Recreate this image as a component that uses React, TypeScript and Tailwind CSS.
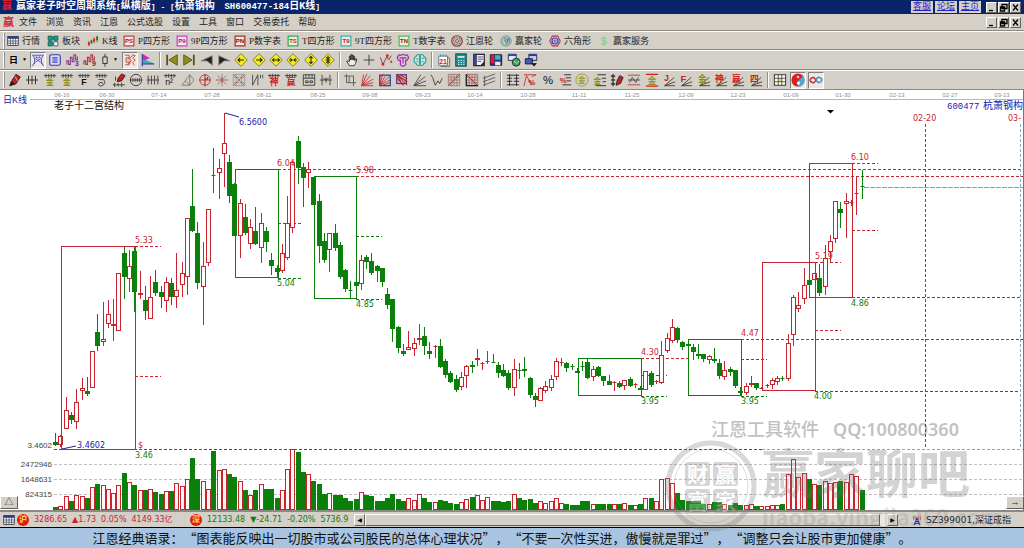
import type { ReactNode } from 'react'
import clsx from 'clsx'

const RED = '#c8242f'
const GREEN = '#0a800a'
const BLUE = '#2020a8'

const SANS = '"Liberation Sans","Noto Sans CJK SC",sans-serif'
const PRICE = '"DejaVu Sans","Noto Sans CJK SC",sans-serif'

// [rising, high, body top, body bottom, low, volume top]
type Bar = [number, number, number, number, number, number]

const BARS: Bar[] = [
  [0, 433, 442, 445, 446, 507], [1, 435, 436, 445, 447, 506], [1, 397, 410, 429, 429, 496], [0, 412, 415, 420, 424, 501],
  [1, 389, 402, 422, 429, 495], [1, 378, 388, 391, 400, 496], [0, 377, 391, 394, 396, 498], [1, 351, 351, 388, 388, 487],
  [0, 314, 332, 346, 351, 484], [1, 302, 339, 342, 346, 485], [1, 300, 314, 324, 328, 489], [1, 299, 324, 326, 341, 493],
  [1, 273, 273, 331, 331, 485], [0, 247, 253, 277, 299, 473], [1, 250, 266, 279, 292, 482], [0, 246, 251, 292, 312, 485],
  [1, 271, 293, 295, 299, 490], [0, 286, 300, 311, 320, 490], [1, 276, 297, 319, 319, 489], [0, 270, 282, 293, 296, 492],
  [0, 286, 292, 297, 308, 494], [1, 277, 282, 301, 312, 491], [0, 278, 283, 297, 305, 491], [1, 253, 290, 297, 308, 483],
  [1, 262, 273, 285, 297, 486], [1, 218, 218, 277, 295, 479], [0, 169, 206, 231, 232, 458], [0, 222, 233, 283, 289, 479],
  [1, 242, 266, 287, 325, 481], [1, 209, 209, 263, 266, 489], [0, 148, 175, 176, 193, 451], [1, 159, 168, 173, 199, 470],
  [1, 113, 143, 154, 187, 469], [0, 155, 162, 196, 203, 474], [0, 183, 184, 236, 236, 477], [1, 199, 203, 236, 258, 481],
  [0, 204, 217, 233, 235, 490], [1, 219, 227, 244, 249, 495], [0, 207, 231, 244, 245, 490], [1, 213, 223, 248, 263, 484],
  [0, 227, 231, 242, 252, 489], [0, 253, 260, 266, 275, 489], [0, 265, 268, 272, 277, 498], [1, 244, 253, 271, 273, 490],
  [1, 196, 223, 258, 260, 469], [1, 161, 162, 228, 233, 449], [0, 136, 141, 168, 184, 452], [0, 163, 167, 178, 207, 472],
  [1, 162, 169, 173, 188, 474], [0, 177, 177, 205, 205, 481], [0, 194, 201, 246, 263, 484], [0, 233, 241, 260, 263, 494],
  [1, 233, 233, 250, 272, 493], [0, 224, 233, 248, 251, 495], [0, 242, 245, 277, 279, 495], [0, 269, 270, 289, 292, 498],
  [0, 281, 290, 291, 298, 501], [0, 281, 282, 286, 287, 499], [1, 255, 260, 284, 290, 492], [0, 255, 257, 262, 269, 495],
  [0, 253, 261, 273, 275, 496], [0, 265, 266, 271, 282, 501], [0, 268, 268, 282, 287, 501], [0, 288, 294, 305, 309, 498],
  [0, 299, 299, 329, 342, 494], [0, 326, 327, 348, 353, 499], [0, 344, 351, 354, 356, 501], [1, 331, 347, 350, 350, 498],
  [1, 338, 343, 349, 356, 500], [1, 324, 338, 340, 345, 494], [0, 327, 336, 346, 355, 498], [0, 342, 351, 354, 359, 502],
  [1, 345, 346, 347, 358, 502], [0, 339, 346, 367, 368, 500], [0, 359, 361, 375, 378, 501], [0, 371, 373, 382, 383, 503],
  [0, 375, 379, 390, 392, 504], [1, 372, 377, 387, 390, 502], [1, 365, 366, 376, 388, 499], [0, 361, 365, 367, 373, 497],
  [1, 349, 358, 360, 366, 495], [1, 362, 363, 364, 370, 500], [1, 351, 361, 362, 364, 497], [0, 354, 362, 363, 363, 501],
  [0, 362, 365, 373, 378, 501], [0, 364, 370, 376, 377, 502], [0, 370, 373, 388, 390, 501], [1, 359, 369, 388, 396, 494],
  [0, 363, 370, 371, 379, 498], [0, 357, 369, 371, 377, 500], [0, 377, 378, 395, 398, 499], [0, 393, 396, 400, 407, 503],
  [1, 387, 388, 401, 401, 501], [1, 381, 386, 391, 393, 503], [1, 375, 379, 388, 391, 501], [1, 358, 361, 377, 380, 498],
  [1, 358, 362, 363, 366, 503], [0, 362, 363, 368, 372, 504], [0, 364, 366, 367, 370, 505], [0, 368, 371, 373, 373, 505],
  [0, 361, 366, 367, 371, 501], [0, 359, 362, 378, 379, 501], [1, 366, 369, 377, 381, 504], [0, 366, 367, 376, 377, 504],
  [0, 376, 376, 381, 386, 504], [0, 375, 381, 385, 385, 504], [1, 381, 382, 383, 391, 504], [0, 381, 383, 387, 388, 504],
  [1, 380, 380, 386, 390, 503], [0, 377, 379, 386, 387, 505], [1, 383, 384, 385, 388, 505], [0, 386, 388, 390, 390, 504],
  [1, 371, 371, 390, 390, 498], [0, 371, 373, 385, 387, 498], [1, 380, 381, 382, 384, 501], [1, 341, 355, 383, 384, 479],
  [1, 333, 338, 351, 353, 478], [1, 319, 327, 341, 343, 483], [0, 327, 328, 340, 343, 493], [0, 341, 342, 347, 350, 500],
  [0, 341, 344, 346, 348, 501], [0, 344, 347, 352, 360, 501], [0, 344, 354, 356, 359, 501], [0, 354, 354, 359, 362, 504],
  [1, 355, 356, 360, 364, 504], [0, 348, 359, 361, 363, 502], [0, 359, 363, 376, 379, 502], [1, 361, 370, 377, 380, 504],
  [0, 367, 369, 372, 376, 505], [0, 370, 370, 386, 388, 503], [0, 387, 391, 393, 395, 505], [1, 383, 386, 393, 395, 505],
  [1, 376, 383, 385, 387, 504], [0, 383, 383, 388, 390, 506], [1, 387, 388, 389, 389, 506], [1, 384, 385, 386, 388, 506],
  [1, 378, 380, 385, 389, 505], [1, 376, 378, 382, 385, 505], [0, 376, 378, 379, 381, 504], [1, 334, 343, 379, 381, 474],
  [1, 295, 297, 335, 346, 459], [1, 292, 305, 309, 312, 477], [1, 268, 285, 299, 304, 473], [0, 278, 280, 285, 287, 479],
  [1, 273, 273, 280, 280, 484], [0, 264, 278, 293, 296, 485], [1, 245, 258, 287, 295, 481], [1, 235, 241, 252, 263, 483],
  [1, 201, 201, 239, 243, 482], [0, 202, 209, 213, 228, 481], [1, 193, 201, 204, 238, 482], [1, 200, 202, 203, 206, 474],
  [1, 176, 193, 194, 215, 476], [0, 170, 186, 187, 199, 490],
]

// [left, top, right, bottom, colour]
const BOXES: [number, number, number, number, string][] = [
  [61, 246, 135, 449, RED],
  [235, 169, 278, 277, GREEN],
  [314, 176, 356, 298, GREEN],
  [578, 358, 641, 395, GREEN],
  [688, 339, 741, 395, GREEN],
  [762, 262, 815, 390, RED],
  [809, 163, 852, 297, RED],
]

// [from x, to x, y, colour]
const LEVELS: [number, number, number, string][] = [
  [135, 161, 246, RED], [135, 161, 376, RED], [278, 1024, 169, RED], [356, 1024, 176, RED],
  [278, 303, 223, GREEN], [278, 303, 278, GREEN], [356, 382, 236, GREEN], [356, 382, 299, GREEN],
  [641, 688, 358, RED], [641, 667, 375, GREEN], [641, 667, 396, GREEN], [741, 1024, 339, RED],
  [741, 767, 359, GREEN], [741, 767, 396, GREEN], [815, 841, 262, RED], [815, 841, 330, RED],
  [815, 1020, 391, GREEN], [852, 878, 163, RED], [852, 878, 230, RED], [852, 1020, 297, GREEN],
  [54, 762, 449, GREEN], [762, 1024, 449, '#a0a0a0'],
  [54, 1024, 464, '#c4bcc0'], [54, 1024, 479, '#c4bcc0'], [54, 1024, 494, '#c4bcc0'],
]

// [x, baseline, text, colour]
const LABELS: [number, number, string, string][] = [
  [135, 243, '5.33', RED], [135, 458, '3.46', GREEN], [138, 448, '$', RED], [239, 125, '6.5600', BLUE],
  [77, 448, '3.4602', BLUE], [277, 166, '6.04', RED], [277, 286, '5.04', GREEN], [356, 173, '5.98', RED],
  [356, 307, '4.85', GREEN], [641, 355, '4.30', RED], [641, 404, '3.95', GREEN], [741, 336, '4.47', RED],
  [741, 404, '3.95', GREEN], [815, 259, '5.19', RED], [814, 399, '4.00', GREEN], [851, 160, '6.10', RED],
  [851, 306, '4.86', GREEN], [913, 121, '02-20', RED], [1008, 121, '03-', RED],
]

const DATES: [number, string][] = [
  [62, '06-16'], [107, '06-30'], [159, '07-14'], [212, '07-28'], [264, '08-11'], [318, '08-25'], [370, '09-08'],
  [423, '09-23'], [475, '10-14'], [528, '10-28'], [579, '11-11'], [632, '11-25'], [686, '12-09'], [738, '12-23'],
  [791, '01-09'], [843, '01-30'], [897, '02-13'], [950, '02-27'], [1002, '03-13'],
]

/* ---------- icons ---------- */

function Glyph({ x = 8, y = 14, size = 9, fill = '#111', bold = true, children }: {
  x?: number; y?: number; size?: number; fill?: string; bold?: boolean; children: string
}) {
  return (
    <text x={x} y={y} fontSize={size} fill={fill} stroke="none" textAnchor="middle" fontWeight={bold ? 700 : 400} fontFamily={SANS}>
      {children}
    </text>
  )
}

const comb = <path d="M1 3h14M3.5 1v4.500M6.5 1v4.500M9.5 1v4.500M12.5 1v4.500" />
const fan = <path d="M3 14.5h12M3 14.5L15 10M3 14.5L14 5" />
const pen = (
  <>
    <path d="M2 14.5l2-5 5-8 5 3-5 8z" fill="#c81e1e" stroke="#222" />
    <path d="M2 14.5l2-5 4 3z" fill="#111" />
    <path d="M8 4l3 5" stroke="#f4b0b0" />
  </>
)

const squareIcon = (label: string, border: string, color: string) => (
  <>
    <rect x="1.5" y="1.5" width="13" height="13" fill="#f3e9e2" stroke={border} strokeWidth="1.6" />
    <Glyph y={11} size={8} fill={color}>{label}</Glyph>
  </>
)

const diamond = (arrows: string) => (
  <>
    <path d="M8 .8L15.2 8 8 15.2.8 8z" fill="#f6ee1c" stroke="#77702a" />
    <path d={arrows} stroke="#222" strokeWidth="1.2" />
  </>
)

const gridLines = 'M1.5 1.5h13v13h-13zM1.5 4.7h13M1.5 8h13M1.5 11.3h13M4.7 1.5v13M8 1.5v13M11.3 1.5v13'

const icons: Record<string, ReactNode> = {
  sheet: (
    <>
      <rect x="1" y="2" width="14" height="12" fill="#fff" stroke="#223" />
      <path d="M1 3.5h14" stroke="#203a8c" strokeWidth="3" />
      <path d="M1 8h14M1 11h14M4.5 4v10M8 4v10M11.5 4v10" stroke="#445" />
    </>
  ),
  blocks: (
    <g fill="#19a08c" stroke="#064d48">
      <path d="M1.5 1.5H7V7H1.5zM9 1.5h5.5V7H9zM1.5 9H7v5.5H1.5z" />
      <path d="M9 9h5.5v5.5H9z" fill="#fff" />
      <path d="M7 4h2M4 7v2M12 7v2M7 12h2" />
    </g>
  ),
  kline: (
    <>
      <path d="M2.5 8v7M6 6v6M9.5 3v8M13.5 1v9" stroke="#a33" />
      <path d="M2.5 9.5v4M9.5 5v4" stroke="#e02020" strokeWidth="2.6" />
      <path d="M6 7v4M13.5 2v5" stroke="#0a8a1a" strokeWidth="2.6" />
    </>
  ),
  ps: squareIcon('PS', '#c04040', '#b01818'),
  p9: squareIcon('P9', '#d03cc8', '#a01890'),
  pn: squareIcon('PN', '#a02828', '#801010'),
  ts: squareIcon('TS', '#20b050', '#c03030'),
  t9: squareIcon('T9', '#28b8a8', '#b02828'),
  tn: squareIcon('TN', '#48c048', '#a01818'),
  wheel: (
    <>
      <circle cx="8" cy="8" r="7" stroke="#a03030" strokeWidth="1.6" />
      <circle cx="8" cy="8" r="4.5" stroke="#287048" />
      <circle cx="8" cy="8" r="2" stroke="#903030" />
    </>
  ),
  winner: (
    <>
      <circle cx="8" cy="8" r="7" stroke="#4898a0" />
      <circle cx="8" cy="8" r="5.3" stroke="#60a868" />
      <path d="M5 5h3v6M5 8h3M10 5v5q0 2-2 2M10 5h2v5" stroke="#3060b0" />
    </>
  ),
  hexagon: (
    <>
      <path d="M4.5 1.5h7L15 8l-3.5 6.5h-7L1 8z" stroke="#c03048" strokeWidth="1.4" />
      <circle cx="8" cy="8" r="4" stroke="#3040c8" strokeWidth="1.6" />
      <circle cx="8" cy="8" r="1.5" stroke="#3040c8" />
    </>
  ),
  dollar: <Glyph y={13} size={14} fill="#8ccf7c">$</Glyph>,

  net: (
    <path d="M1.5 2.5h13M2 14.5l2-4V6L2 2.5M14 14.5l-2-4V6l2-3.5M4 6l8 5M12 6l-8 5M1.5 14.5l3-3M14.5 14.5l-3-3M6 2.5v3h4v-3" stroke="#4848d8" />
  ),
  scroll: (
    <g stroke="#3838c0" strokeWidth="1.3">
      <path d="M4 2h8q2 0 2 2v8q0 2-2 2H4q-2 0-2-2V4q0-2 2-2z" fill="#dcdcf4" />
      <path d="M5 5.5h6M5 8h6M5 10.5h6" />
    </g>
  ),
  wave3: (
    <>
      <path d="M1 13V9h2v4h2V5h2v5h2V2h2v6h2V4" stroke="#8c3488" strokeWidth="1.2" />
      <Glyph x={12.5} y={14.5} size={8} fill="#702880">3</Glyph>
    </>
  ),
  wave9: (
    <>
      <path d="M1 13V9h2v4h2V5h2v5h2V2h2v6h2V4" stroke="#a83440" strokeWidth="1.2" />
      <Glyph x={12.5} y={14.5} size={8} fill="#802028">9</Glyph>
    </>
  ),
  candle: <path d="M8 1v3.5M8 12v3.5M5.5 4.5h5V12h-5z" stroke="#222" />,
  knot: (
    <path d="M2 2.5h5v3H3.5v5H7v3H2.5M10 2l4 1-3 3 3 2-3 3 2 3M5 8l6-5M5 13l5-5M8 6v6" stroke="#d03838" />
  ),
  flag: (
    <>
      <path d="M2 1l8 5-8 3z" fill="#d028c0" stroke="none" />
      <path d="M2 7l12 4H2z" fill="#28a8b8" stroke="none" />
      <path d="M1.5 1v14M1 12.5h14" stroke="#2838a8" strokeWidth="1.3" />
    </>
  ),
  first: (
    <>
      <path d="M2.5 2v12" stroke="#505018" strokeWidth="2" />
      <path d="M14 2v12L4.5 8z" fill="#909018" stroke="#505018" />
    </>
  ),
  last: (
    <>
      <path d="M13.5 2v12" stroke="#505018" strokeWidth="2" />
      <path d="M2 2v12L11.5 8z" fill="#909018" stroke="#505018" />
    </>
  ),
  prev: <path d="M14 3v11L8 9H1z" fill="#222" stroke="#888" />,
  next: <path d="M2 3v11l6-5h7z" fill="#222" stroke="#888" />,
  dLeft: diamond('M4.5 8h7M7 5.5L4.5 8 7 10.5'),
  dRight: diamond('M4.5 8h7M9 5.5L11.5 8 9 10.5'),
  dWide: diamond('M4 8h8M6 6L4 8l2 2M10 6l2 2-2 2'),
  dNarrow: diamond('M3.5 8h3M9.5 8h3M5 6l2 2-2 2M11 6L9 8l2 2'),
  dUp: diamond('M8 4v8M6 6l2-2 2 2M6 10l2 2 2-2'),
  dDown: diamond('M5 8h6M8 3.5v3M8 9.5v3M6 5l2 2 2-2M6 11l2-2 2 2'),

  hand: <path d="M5 14.5L2 9.500 3.5 8.700 5 10V4h1.5v4V2H8v6V2.5h1.5V8V4H11v5l1-2.5 1.5.5-1.500 5-1.500 2.500z" fill="#f0ede6" stroke="#222" />,
  cross: <path d="M8 2v12M2 8h12" stroke="#333" />,
  zigzag: (
    <>
      <path d="M1.5 5l3 8L9 4l2 4 3-5" stroke="#883030" />
      <path d="M3 13h3M8 3h3M13 10h2" stroke="#d02020" strokeWidth="2.5" />
    </>
  ),
  flower: <path d="M3 2.5h3l2-1 2 1h3l1.500 3-2 3H11v5L9 15H7l-2-1.500v-5H3l-1.500-3zM4 5.5h8M8 5.5V12" stroke="#a028b0" strokeWidth="1.4" />,
  brain: <path d="M7.5 2q-3-1-4 2-3 1-2 4-1 3 2 4 1 3 4 2zM8.500 2q3-1 4 2 3 1 2 4 1 3-2 4-1 3-4 2zM4 7h2M10 6h3M4 10h2M10 10h2" stroke="#30a098" strokeWidth="1.2" fill="#c4e4dc" />,
  calendar: (
    <>
      <path d="M2 3.5h10V14H2z" fill="#fff" stroke="#487880" />
      <path d="M12.5 5l2 1v9.500H4" stroke="#666" />
      <path d="M4 1.5v3M7 1.5v3M10 1.5v3" stroke="#38a0a0" />
      <Glyph x={7} y={12.5} size={8} fill="#d02020">21</Glyph>
    </>
  ),
  calc: (
    <>
      <rect x="2" y="1" width="12" height="14" fill="#189098" stroke="#083840" />
      <path d="M4 3.5h8v2H4z" fill="#d4f0d4" stroke="none" />
      <path d="M4.500 8.500H6M7.500 8.500H9M10.500 8.500H12M4.500 11H6M7.500 11H9M10.500 11H12M4.500 13.200H6M7.500 13.200H9M10.500 13.200H12" stroke="#fff" />
    </>
  ),
  book: (
    <>
      <path d="M2 1.5h12v13H2z" fill="#f4f4fa" stroke="#222" strokeWidth="1.4" />
      <path d="M2 1.5h3v13H2z" fill="#3848b0" />
      <path d="M6.5 4.5h6M6.5 7h6M6.5 9.5h4" stroke="#3838a0" />
      <path d="M10 14l4-4v4z" fill="#222" />
    </>
  ),
  floppy: (
    <>
      <path d="M1.5 2h13v12h-13z" fill="#2838a8" stroke="#111" />
      <path d="M2 2.5h4v9H2z" fill="#e02020" stroke="none" />
      <path d="M7 2.5h6v5H7z" fill="#38b8b8" stroke="none" />
      <path d="M7 10h6v4H7z" fill="#eee" stroke="none" />
    </>
  ),
  globe: (
    <>
      <path d="M1.5 1.5h9v7h-9z" fill="#e8ecf8" stroke="#224" />
      <path d="M1.5 2.5h9" stroke="#2848b8" strokeWidth="2" />
      <circle cx="10.5" cy="10.5" r="4.5" fill="#48a060" stroke="#123" />
      <path d="M8 9l3 3 3-3" stroke="#dde" />
    </>
  ),
  windows: (
    <>
      <path d="M5.5 1.5h9v7h-9z" fill="#c4ccf0" stroke="#224" />
      <path d="M5.5 2.5h9" stroke="#2838b8" strokeWidth="2" />
      <path d="M1.5 6.5h8v6h-8z" fill="#4858c0" stroke="#112" />
      <path d="M9 12h5l-2.500 3z" fill="#222" stroke="#222" />
    </>
  ),

  pen,
  ticks3: <path d="M1 8h14M4 3v10M8 3v10M12 3v10" stroke="#222" />,
  combGold: <>{comb}<Glyph y={14} size={9} fill="#8a8a10">金</Glyph></>,
  combF: <>{comb}<Glyph y={14} size={10}>F</Glyph></>,
  combSpiral: <>{comb}<path d="M5 7.5h6q3 3 0 6-4 3-6 0 0-3 4-3 2 1 0 2" /></>,
  penRuler: (
    <>
      <path d="M6 10l1-4 4-5 4 2-4 6z" fill="#c81e1e" stroke="#222" />
      <path d="M1 13.5h14M3 11v5M7 11.5v4M11 11v5M4 9V4" />
    </>
  ),
  circleTicks: (
    <>
      <circle cx="8" cy="8" r="6.5" />
      <path d="M1 8h14M4.5 6v4M7 6v4M9.5 6v4M12 6v4" />
    </>
  ),
  ticks4: <path d="M1 8h14M2.5 3v10M6.2 3v10M9.8 3v10M13.5 3v10" />,
  combN: <>{comb}<Glyph x={7} y={14} size={10} bold={false}>n²</Glyph></>,
  triangles: <path d="M1 14L10 2v12zM10 2l5 6-5 6M5 9l5 5" stroke="#777" />,
  target: (
    <>
      <circle cx="8" cy="8" r="6" stroke="#a04040" />
      <path d="M8 1v14M1 8h14" stroke="#c83030" strokeWidth="1.4" />
      <path d="M8 8l3-3M11 5v3" />
    </>
  ),
  radial: (
    <>
      <path d="M3 3l10 10M13 3L3 13M8 1v14" stroke="#888" />
      <path d="M1 8h14M8 5v6" stroke="#b84848" />
    </>
  ),
  radialGrid: (
    <>
      <path d="M1.5 1.5h13v13h-13zM5 1.5v13M11 1.5v13M1.5 5h13M1.5 11h13" stroke="#999" />
      <path d="M1.5 1.5l13 13M14.5 1.5l-13 13" stroke="#a46868" />
    </>
  ),
  pitch: <path d="M3 2v12L9 2v12M12 2v4M14.5 2v4" stroke="#444" />,
  combShen: <>{comb}<Glyph y={14} size={10} fill="#d02020">神</Glyph></>,
  combYing: <>{comb}<Glyph y={14} size={10} fill="#d02020">赢</Glyph></>,
  combBox: <path d="M1.5 2h13v12h-13zM1.5 6h13M4.5 2v4M8 2v4M11.5 2v4M4 9h3v2H4zM9 9h3v2H9z" />,
  ticksArrow: <path d="M1 8h14M3.5 2v12M12.5 2v12M8 5v6M5 6l3 2M11 6L8 8" />,

  crop: <path d="M4 1v10h11M1 3.5h11V15M7 4v7" stroke="#555" />,
  fanRed: <path d="M2 14.5L4 2M2 14.5L8 1M2 14.5L12 3M2 14.5L15 7M2 14.5L15 11M2 14.5h13" stroke="#c03030" />,
  fanBlue: (
    <>
      <rect x="2" y="2.5" width="12" height="12" stroke="#2838a8" strokeWidth="1.4" />
      <path d="M2 14L5 3M2 14L8 4M2 14L13 4M2 14l12-6M5 14l9-3M1 6l5-5" stroke="#b83030" />
    </>
  ),
  fanPurple: (
    <>
      <rect x="2" y="2" width="11" height="10" fill="#e4b8c4" stroke="#583080" strokeWidth="1.4" />
      <path d="M2 2l12 12M2 2l12 8M2 2l7 12M2 6l8 8M6 2l8 5" stroke="#a02838" strokeWidth="1.2" />
    </>
  ),
  fanBlack: <path d="M1 14.5h14M1 14.5L15 9M1 14.5L14 4M1 14.5L9 2" stroke="#444" />,
  vee: <path d="M1 2l2 3 3 9 3-5 2 3 3-6" stroke="#333" />,
  gridRed: <><path d={gridLines} stroke="#a87070" /><path d="M1.5 14.5l13-13" stroke="#884040" /></>,
  gridDark: <><path d={gridLines} stroke="#9c6868" /><path d="M1.5 1v13.500H15" stroke="#222" strokeWidth="1.5" /><path d="M2 2l12 12" stroke="#a03030" /></>,
  parallels: <path d="M1 6l6-2 8-3M1 10l6-2 8-3M1 14l6-2 8-3M3 3v12" stroke="#555" />,

  ladder: <path d="M4 1.5v13M12 1.5v13M1 2.5h14M1 6h6M9 6h6M1 9.5h6M9 9.5h6M1 13.5h14" stroke="#222" />,
  pctLines: <><path d="M1 2h14M4 3L1 15M4 3l6 11M10 4l5-2" stroke="#c83030" /><Glyph x={10} y={14} size={9} fill="#c02020">%</Glyph></>,
  pct: <Glyph y={12.5} size={13} bold={false}>%</Glyph>,
  pctRed: <><path d="M7 2h8M9 5.5h6M10 9h5M5 13.5h10" stroke="#222" /><Glyph x={6} y={11} size={9} fill="#d02020">%</Glyph></>,
  goldCircle: <><circle cx="8" cy="8" r="7" stroke="#9c9c30" /><Glyph y={11.5} size={9} fill="#9c9c20">金</Glyph></>,
  goldLines: <><path d="M5 2h10M10 6h5M11 10h4M3 14.5h12" stroke="#222" /><Glyph x={5} y={12} size={9} fill="#8a8a10">金</Glyph></>,
  penTicks: (
    <>
      <path d="M7 14l1-5 3-6 4 2-3 7z" fill="#c81e1e" stroke="#222" />
      <path d="M3.5 1v14M1 3.5h5M1 8h5M1 12.5h5" stroke="#222" strokeWidth="1.3" />
    </>
  ),
  waveLines: <><path d="M1 2.5h14M1 13.5h14" stroke="#c83030" /><path d="M1 8h14M3 11l3-6 4 6 3-6" stroke="#444" /></>,
  goldBars: <><path d="M1 1.5h14M1 15h14" stroke="#d02020" strokeWidth="1.5" /><Glyph y={12} size={10} fill="#a09010">金</Glyph></>,
  fanJ: <>{fan}<Glyph x={5} y={9} size={10} fill="#d02020">J</Glyph></>,
  fanF: <>{fan}<Glyph x={5} y={10} size={11} fill="#d02020">F</Glyph></>,
  fanGold: <>{fan}<Glyph x={6} y={10} size={10} fill="#909010">金</Glyph></>,
  fanShen: <>{fan}<Glyph x={6} y={10} size={10} fill="#d02020">神</Glyph></>,
  fanYing: <>{fan}<Glyph x={6} y={10} size={10} fill="#d02020">赢</Glyph></>,
  fanFour: <>{fan}<Glyph x={6} y={10} size={10} fill="#d02020">四</Glyph></>,

  table: (
    <>
      <rect x="1.5" y="2" width="13" height="12" fill="#fff" stroke="#222" />
      <path d="M6 6h4v4H6z" fill="#f4e820" stroke="none" />
      <path d="M1.5 6h13M1.5 10h13M6 2v12M10 2v12" stroke="#444" />
    </>
  ),
  yinyang: (
    <g stroke="none">
      <circle cx="8" cy="8" r="7.5" fill="#d82020" />
      <path d="M8 15.500A7.500 7.500 0 0 0 12 1.700Q14 5 10 7T8 15.500z" fill="#48a8e0" />
      <circle cx="8.5" cy="11.5" r="1.800" fill="#fff" />
      <circle cx="8" cy="4.5" r="1.500" fill="#fbb" />
    </g>
  ),
  infinity: (
    <>
      <path d="M8 8Q5 3.500 2.500 6T3 10.500 8 8" stroke="#d02838" strokeWidth="1.8" />
      <path d="M8 8q3 4.500 5.500 2T13 5.500 8 8" stroke="#4890c8" strokeWidth="1.8" />
    </>
  ),
  antenna: (
    <>
      <path d="M8 5l-4 10M8 5l4 10M6 10h4M5 12.5h6" stroke="#2838b0" strokeWidth="1.4" />
      <path d="M4 2q-2 3 0 6M12 2q2 3 0 6M6 3.5q-1 1.5 0 3M10 3.5q1 1.5 0 3" stroke="#d02828" />
    </>
  ),
}

icons.combGold2 = icons.combGold

function Icon({ name, className = 'size-3.5' }: { name: string; className?: string }) {
  return (
    <svg viewBox="0 0 16 16" className={clsx('shrink-0 overflow-visible', className)} fill="none" stroke="#3a3a3a" strokeWidth="1" aria-hidden="true">
      {icons[name]}
    </svg>
  )
}

/* ---------- bars ---------- */

const MENU = ['文件', '浏览', '资讯', '江恩', '公式选股', '设置', '工具', '窗口', '交易委托', '帮助']

const VIEWS: [string, string, string][] = [
  ['sheet', '行情', 'w-10'], ['blocks', '板块', 'w-10'], ['kline', 'K线', 'w-9'],
  ['ps', 'P四方形', 'w-[53px]'], ['p9', '9P四方形', 'w-[58px]'], ['pn', 'P数字表', 'w-[53px]'],
  ['ts', 'T四方形', 'w-[53px]'], ['t9', '9T四方形', 'w-[58px]'], ['tn', 'T数字表', 'w-[53px]'],
  ['wheel', '江恩轮', 'w-[49px]'], ['winner', '赢家轮', 'w-[49px]'], ['hexagon', '六角形', 'w-[49px]'],
  ['dollar', '赢家服务', 'w-[58px]'],
]

const raised = 'border border-t-white border-l-white border-r-[#606060] border-b-[#606060] bg-[#d4d0c8]'

function ToolGroup({ names, width, pressed = [] }: { names: string[]; width: string; pressed?: string[] }) {
  return (
    <div className={clsx('flex shrink-0 items-center justify-between', width)}>
      {names.map((name) => (
        <button
          key={name}
          type="button"
          aria-label={name}
          className={clsx(
            'flex h-[17px] w-4 items-center justify-center',
            pressed.includes(name) && 'border border-t-[#808080] border-r-white border-b-white border-l-[#808080] bg-[#ece9e4]',
          )}
        >
          <Icon name={name} />
        </button>
      ))}
    </div>
  )
}

function Divider() {
  return <div className="mx-[3px] h-4 w-0.5 shrink-0 border-r border-l border-r-white border-l-[#909090]" />
}

function Grip() {
  return <div className="mr-0.5 ml-[3px] h-4 w-0.5 shrink-0 border-r border-l border-r-[#909090] border-l-white" />
}

function WindowButtons() {
  return (
    <div className="flex gap-px">
      {[['最小化', 'M2 7.5h4'], ['还原', 'M3 1.5h5v4H3zM1.5 4h4v4h-4z'], ['关闭', 'M2 1.5l5 6M7 1.5l-5 6']].map(([label, d]) => (
        <button key={label} type="button" aria-label={label} className={clsx('flex size-[11px] items-center justify-center', raised)}>
          <svg viewBox="0 0 9 9" className="size-[9px]" fill="none" stroke="#000" strokeWidth="1.3"><path d={d} /></svg>
        </button>
      ))}
    </div>
  )
}

function TitleBar() {
  return (
    <header className="flex h-3.5 items-center bg-[#0a246a] pr-[3px] pl-0.5 font-['Liberation_Mono','Noto_Sans_CJK_SC'] text-[10px] leading-none text-white">
      <span className="w-3.5 font-bold text-[#e02030]">赢</span>
      <h1 className="flex-1 font-bold whitespace-pre">
        赢家老子时空周期系统<span className="text-[8px]">[</span>纵横版<span className="text-[8px]">] - [</span>杭萧钢构
        <span className="text-[8px]">{'  '}</span>
        <span className="text-[9px]">SH600477-184</span>日K线<span className="text-[8px]">]</span>
      </h1>
      <nav className="mr-[5px] flex gap-0.5 text-[9px]">
        {['客服', '论坛', '主页'].map((label) => (
          <a key={label} href="#" className="flex h-3 w-[22px] items-center justify-center bg-[#d4d0c8] text-[#2020d0] underline">{label}</a>
        ))}
      </nav>
      <WindowButtons />
    </header>
  )
}

function MenuBar() {
  return (
    <div className="flex h-[17px] items-center border-b border-[#8c8984] px-[3px]">
      <span className="w-4 text-[11px] leading-none font-bold text-[#d02030]">赢</span>
      <nav className="flex flex-1 gap-[9px]">
        {MENU.map((item) => (
          <button key={item} type="button">{item}</button>
        ))}
      </nav>
      <WindowButtons />
    </div>
  )
}

function Toolbars() {
  return (
    <>
      <div className="flex h-[19px] items-center border-t border-b border-t-white border-b-[#8c8984]">
        <Grip />
        {VIEWS.map(([icon, label, width]) => (
          <button key={label} type="button" className={clsx('flex shrink-0 items-center gap-[3px] whitespace-nowrap', width)}>
            <Icon name={icon} className="size-3" />
            {label}
          </button>
        ))}
      </div>
      <div className="flex h-5 items-center border-t border-b border-t-white border-b-[#8c8984]">
        <Grip />
        <button type="button" className="flex w-[23px] items-center gap-1 pl-0.5 font-bold text-black">
          日<span className="text-[5px]">▼</span>
        </button>
        <ToolGroup width="w-[68px]" names={['net', 'scroll', 'wave3', 'wave9']} pressed={['net']} />
        <button type="button" aria-label="线型" className="flex w-6 items-center gap-px text-[5px] text-black">
          <Icon name="candle" />▼
        </button>
        <ToolGroup width="w-[34px]" names={['knot', 'flag']} pressed={['knot']} />
        <Divider />
        <ToolGroup width="w-[172px]" names={['first', 'last', 'prev', 'next', 'dLeft', 'dRight', 'dWide', 'dNarrow', 'dUp', 'dDown']} />
        <Divider />
        <ToolGroup width="w-[84px]" names={['hand', 'cross', 'zigzag', 'flower', 'brain']} />
        <Divider />
        <ToolGroup width="w-[103px]" names={['calendar', 'calc', 'book', 'floppy', 'globe', 'windows']} />
      </div>
      <div className="flex h-5 items-center border-t border-b border-t-white border-b-[#8c8984]">
        <Grip />
        <ToolGroup
          width="w-[327px]"
          names={['pen', 'ticks3', 'combGold', 'combGold2', 'combF', 'combSpiral', 'penRuler', 'circleTicks', 'ticks4', 'combN', 'triangles', 'target', 'radial', 'radialGrid', 'pitch', 'combShen', 'combYing', 'combBox', 'ticksArrow']}
        />
        <Divider />
        <ToolGroup width="w-[155px]" names={['crop', 'fanRed', 'fanBlue', 'fanPurple', 'fanBlack', 'vee', 'gridRed', 'gridDark', 'parallels']} />
        <Divider />
        <ToolGroup
          width="w-[259px]"
          names={['ladder', 'pctLines', 'pct', 'pctRed', 'goldCircle', 'goldLines', 'penTicks', 'waveLines', 'goldBars', 'fanJ', 'fanF', 'fanGold', 'fanShen', 'fanYing', 'fanFour']}
        />
        <Divider />
        <ToolGroup width="w-[52px]" names={['table', 'yinyang', 'infinity']} pressed={['yinyang', 'infinity']} />
      </div>
    </>
  )
}

/* ---------- chart ---------- */

function Candle({ bar, x }: { bar: Bar; x: number }) {
  const [up, high, top, bottom, low, vol] = bar
  const color = up ? RED : GREEN
  const flat = bottom - top < 2
  return (
    <g stroke={color} fill={up ? '#fff' : GREEN}>
      <path d={`M${x} ${high}V${low}`} />
      {flat ? <path d={`M${x - 2} ${top + 0.5}h4`} /> : <rect x={x - 2} y={top + 0.5} width="4" height={bottom - top - 1} />}
      <rect x={x - 2} y={vol + 0.5} width="4" height={509 - vol} fill={up ? '#fff6f6' : GREEN} />
    </g>
  )
}

function Chart() {
  return (
    <svg viewBox="0 90 1024 420" className="block w-full" fontFamily={PRICE} fontSize="8" fill="none" role="img" aria-label="杭萧钢构 日K线">
      <path d="M30 99.5H1024" stroke="#b8b8b8" />
      <g fontSize="6" fill="#909090" fontFamily={SANS} textAnchor="middle">
        {DATES.map(([x, date]) => <text key={date} x={x} y="97">{date}</text>)}
      </g>
      <g fontSize="10" fontFamily={SANS}>
        <text x="3" y="103" fontSize="9" fill={BLUE}>日K线</text>
        <text x="54" y="109" fill="#111">老子十二宫结构</text>
        <text x="947" y="109" fill={BLUE} fontSize="9" fontFamily="Liberation Mono">600477</text>
        <text x="983" y="109" fill={BLUE}>杭萧钢构</text>
      </g>
      <path d="M827 110h7l-3.5 3.5z" fill="#000" />

      {LEVELS.map(([x1, x2, y, color]) => (
        <path key={`${x1}-${y}`} d={`M${x1} ${y + 0.5}H${x2}`} stroke={color} strokeDasharray="3 2" />
      ))}
      <path d="M864 187.5H1024" stroke="#999" strokeDasharray="5 1" />
      <path d="M925.5 124V448" stroke={RED} strokeDasharray="3 2" />
      <path d="M1020.5 124V448" stroke="#8ab0d0" strokeDasharray="3 2" />
      <path d="M1023.5 90V510" stroke="#777" />

      {BARS.map((bar, i) => <Candle key={i} bar={bar} x={Math.floor(55.7 + i * 5.27) + 0.5} />)}

      {BOXES.map(([x1, y1, x2, y2, color]) => (
        <rect key={x1} x={x1 + 0.5} y={y1 + 0.5} width={x2 - x1} height={y2 - y1} stroke={color} />
      ))}
      <path d="M225 113l14 4M62 449l14-3" stroke={BLUE} />
      {LABELS.map(([x, y, text, color]) => (
        <text key={`${x}-${y}`} x={x} y={y} fill={color}>{text}</text>
      ))}
      <g fontFamily={SANS} fill="#444" textAnchor="end">
        <text x="52" y="448">3.4602</text>
        <text x="52" y="467">2472946</text>
        <text x="52" y="482">1648631</text>
        <text x="52" y="497">824315</text>
      </g>
    </svg>
  )
}

function Watermark() {
  return (
    <svg
      viewBox="0 90 1024 420"
      className="pointer-events-none absolute inset-x-0 top-0 z-10 block w-full overflow-visible opacity-30"
      fontFamily='"Noto Sans CJK SC",sans-serif'
      fontWeight="700"
      fill="#707070"
      aria-hidden="true"
    >
      <g fontSize="18" fontWeight="500" fill="#333">
        <text x="711" y="436">江恩工具软件</text>
        <text x="833" y="436" fontFamily='"Noto Sans",sans-serif' fontWeight="600">QQ:100800360</text>
      </g>
      <circle cx="711" cy="486" r="43" fill="none" stroke="#808080" strokeWidth="5" />
      <circle cx="711" cy="486" r="37" fill="none" stroke="#909090" strokeWidth="1" />
      <g fill="#777">
        <rect x="685" y="462" width="25" height="24" rx="3" />
        <rect x="713" y="462" width="25" height="24" rx="3" />
        <rect x="685" y="489" width="25" height="24" rx="3" />
        <rect x="713" y="489" width="25" height="24" rx="3" />
      </g>
      <g fill="#fff" fontSize="21">
        <text x="687" y="482">财</text>
        <text x="715" y="482">赢</text>
        <text x="687" y="509">富</text>
        <text x="715" y="509">家</text>
      </g>
      <text x="762" y="493" fontSize="52">赢家聊吧</text>
      <text x="762" y="526" fontSize="22" fillOpacity=".6">jiaoba.yingjia360.com</text>
    </svg>
  )
}

/* ---------- status bar ---------- */

function Seal({ children }: { children: string }) {
  return (
    <span className="flex size-3 shrink-0 items-center justify-center rounded-full bg-[#e01818] text-[8px] leading-none font-bold text-[#ffe040]">
      {children}
    </span>
  )
}

function StatusBar() {
  return (
    <div className="flex h-[18px] items-center border-t-2 border-b border-t-[#8c8984] border-b-black bg-[#d4d0c8] font-['DejaVu_Sans','Noto_Sans_CJK_SC'] text-[8px]">
      <div className="flex w-[354px] shrink-0 items-center whitespace-nowrap">
        <div className="flex w-[190px] shrink-0 items-center gap-[5px] pl-[3px] text-[#c8242f]">
          <div className="flex gap-0.5">
            <Icon name="sheet" className="size-3" />
            <Seal>沪</Seal>
          </div>
          <span>3286.65</span>
          <span>▲1.73</span>
          <span>0.05%</span>
          <span>4149.33亿</span>
        </div>
        <div className="flex shrink-0 items-center gap-[5px] text-[#0a800a]">
          <Seal>深</Seal>
          <span>12133.48</span>
          <span>▼-24.71</span>
          <span>-0.20%</span>
          <span>5736.9</span>
        </div>
      </div>
      <div role="scrollbar" aria-label="时间轴" aria-controls="chart" aria-valuenow={0} className="flex h-3 flex-1 bg-[#ece9e4]">
        <button type="button" aria-label="向左" className={clsx('flex w-[11px] items-center justify-center text-[6px] leading-none text-black', raised)}>◀</button>
        <div className={clsx('flex-1', raised)} />
        <div className="w-[7px]" />
        <button type="button" aria-label="向右" className={clsx('flex w-[11px] items-center justify-center text-[6px] leading-none text-black', raised)}>▶</button>
      </div>
      <div className="flex w-[126px] shrink-0 items-center gap-[3px] pl-[13px] text-[9px] whitespace-nowrap text-[#222]">
        <Icon name="antenna" className="size-3" />
        SZ399001,深证成指
      </div>
    </div>
  )
}

export default function App() {
  return (
    <div lang="zh-CN" className="flex min-h-screen flex-col overflow-x-hidden bg-[#d4d0c8] font-['Liberation_Serif','Noto_Sans_CJK_SC',sans-serif] text-[9px] leading-3 text-[#222]">
      <TitleBar />
      <MenuBar />
      <Toolbars />
      <main id="chart" className="relative bg-white">
        <Chart />
        <Watermark />
        <button type="button" aria-label="展开" className={clsx('absolute bottom-px left-0 h-[13px] w-[18px] text-[9px] leading-none', raised)}>△</button>
        <button type="button" aria-label="前进" className={clsx('absolute right-0 bottom-px h-[13px] w-[18px] text-[9px] leading-none', raised)}>→</button>
      </main>
      <StatusBar />
      <footer className="flex flex-1 items-center justify-center bg-[#a8c4e0] pr-5 font-['Noto_Sans_CJK_SC'] text-[13px] leading-5 whitespace-nowrap text-[#111] [text-spacing-trim:space-all]">
        江恩经典语录：“图表能反映出一切股市或公司股民的总体心理状况”，“不要一次性买进，傲慢就是罪过”，“调整只会让股市更加健康”。
      </footer>
    </div>
  )
}
